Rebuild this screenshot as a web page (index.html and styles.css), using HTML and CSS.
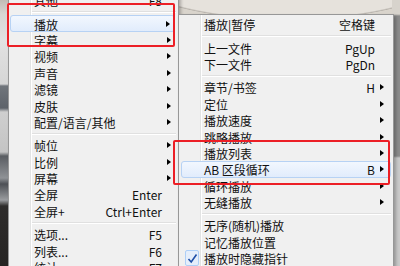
FILE: index.html
```html
<!DOCTYPE html>
<html lang="zh-CN">
<head>
<meta charset="utf-8"/>
<title>播放菜单</title>
<link rel="stylesheet" href="styles.css">
</head>
<body>
<div class="desk">
    <div class="strip-left"></div>
    <div class="strip-top"></div>
    <div class="strip-right"></div>

    <!-- Hauptmenü -->
    <div class="menu menu-main">
        <div class="item"><span class="label">其他</span><span class="key">F8</span><span class="arr"></span></div>
        <div class="sep"></div>
        <div class="item hot"><span class="label">播放</span><span class="arr"><i></i></span></div>
        <div class="item"><span class="label">字幕</span><span class="arr"><i></i></span></div>
        <div class="item"><span class="label">视频</span><span class="arr"><i></i></span></div>
        <div class="item"><span class="label">声音</span><span class="arr"><i></i></span></div>
        <div class="item"><span class="label">滤镜</span><span class="arr"><i></i></span></div>
        <div class="item"><span class="label">皮肤</span><span class="arr"><i></i></span></div>
        <div class="item"><span class="label">配置/语言/其他</span><span class="arr"><i></i></span></div>
        <div class="sep"></div>
        <div class="item"><span class="label">帧位</span><span class="arr"><i></i></span></div>
        <div class="item"><span class="label">比例</span><span class="arr"><i></i></span></div>
        <div class="item"><span class="label">屏幕</span><span class="arr"><i></i></span></div>
        <div class="item"><span class="label">全屏</span><span class="key">Enter</span><span class="arr"></span></div>
        <div class="item"><span class="label">全屏+</span><span class="key">Ctrl+Enter</span><span class="arr"></span></div>
        <div class="sep"></div>
        <div class="item"><span class="label">选项...</span><span class="key">F5</span><span class="arr"></span></div>
        <div class="item"><span class="label">列表...</span><span class="key">F6</span><span class="arr"></span></div>
        <div class="item"><span class="label">统计...</span><span class="key">F7</span><span class="arr"></span></div>
    </div>

    <!-- Untermenü Wiedergabe -->
    <div class="menu menu-sub">
        <div class="item"><span class="label">播放|暂停</span><span class="key">空格键</span><span class="arr"></span></div>
        <div class="sep"></div>
        <div class="item"><span class="label">上一文件</span><span class="key">PgUp</span><span class="arr"></span></div>
        <div class="item"><span class="label">下一文件</span><span class="key">PgDn</span><span class="arr"></span></div>
        <div class="sep"></div>
        <div class="item"><span class="label">章节/书签</span><span class="key">H</span><span class="arr"><i></i></span></div>
        <div class="item"><span class="label">定位</span><span class="arr"><i></i></span></div>
        <div class="item"><span class="label">播放速度</span><span class="arr"><i></i></span></div>
        <div class="item"><span class="label">跳略播放</span><span class="arr"><i></i></span></div>
        <div class="item"><span class="label">播放列表</span><span class="arr"><i></i></span></div>
        <div class="item hot"><span class="label">AB 区段循环</span><span class="key">B</span><span class="arr"><i></i></span></div>
        <div class="item"><span class="label">循环播放</span><span class="arr"><i></i></span></div>
        <div class="item"><span class="label">无缝播放</span><span class="arr"><i></i></span></div>
        <div class="sep"></div>
        <div class="item"><span class="label">无序(随机)播放</span><span class="arr"></span></div>
        <div class="item"><span class="label">记忆播放位置</span><span class="arr"></span></div>
        <div class="item checked">
            <span class="check"><svg width="11" height="11" viewBox="0 0 11 11"><path d="M1.5 6 L4.2 9 L9.5 1.5" fill="none" stroke="#1f4fa8" stroke-width="1.6"/></svg></span>
            <span class="label">播放时隐藏指针</span><span class="arr"></span>
        </div>
    </div>

    <!-- Markierungen -->
    <div class="mark mark-main"></div>
    <div class="mark mark-sub"></div>
</div>
</body>
</html>
```

FILE: styles.css
```css
body {
    margin: 0;
    font-family: "Noto Sans CJK SC", "Liberation Sans", sans-serif;
    font-size: 12px;
    color: #000;
}

.desk {
    position: relative;
    width: 400px;
    height: 266px;
    overflow: hidden;
    background: #c9c9c9;
}

/* Hintergrund hinter den Menüs */
.strip-left {
    position: absolute;
    left: 0;
    top: 0;
    width: 9px;
    height: 266px;
    background: linear-gradient(#c2bdb6 0, #d8d6d3 14px, #e2e2e2 40px, #d6d6d6 84px, #70757b 86px, #5e636a 108px, #cfcfcf 112px, #c4c4c4 152px, #5a5d62 156px, #8f9296 178px, #4d5055 184px, #9a9c9f 200px, #2e2c2b 206px, #262423 266px);
}

.strip-top {
    position: absolute;
    left: 178px;
    top: 0;
    width: 222px;
    height: 16px;
    background: radial-gradient(ellipse 180px 60px at 110px -40px, #e6e2dc 0, #e6e2dc 97%, #b9b4ad 99%, #d9d4cc 100%);
}

.strip-right {
    position: absolute;
    left: 392px;
    top: 0;
    width: 8px;
    height: 266px;
    background: linear-gradient(#d7d3cc 0, #d7d3cc 14px, #8b8b8b 16px, #8b8b8b 156px, #c9c9c9 158px);
}

/* Menüs */
.menu {
    position: absolute;
    border: 1px solid #979797;
    padding: 2px;
    background: linear-gradient(to right, #f0f0f0 21px, #e2e3e3 21px, #e2e3e3 22px, #fff 22px, #fff 23px, #f0f0f0 23px);
    box-shadow: 2px 2px 3px rgba(0, 0, 0, 0.25);
}

.menu-main {
    left: 8px;
    top: -11px;
    width: 165px;
}

.menu-sub {
    left: 178px;
    top: 14px;
    width: 210px;
    padding-top: 1px;
}

.item {
    display: flex;
    align-items: center;
    height: 16.4px;
    padding-left: 22px;
    padding-top: 2px;
    box-sizing: border-box;
    white-space: nowrap;
    line-height: 1;
    color: #111;
    border: 1px solid transparent;
    border-radius: 3px;
}

.item .label {
    flex: 1;
}

.item .key {
    text-align: right;
}

.item .arr {
    width: 9px;
    display: flex;
    justify-content: flex-end;
    margin-right: 4px;
    margin-top: -2px;
}

.menu-sub .item .arr {
    margin-right: 6px;
}

.item .arr i {
    width: 0;
    height: 0;
    border-top: 3.5px solid transparent;
    border-bottom: 3.5px solid transparent;
    border-left: 4px solid #000;
}

.item.hot {
    border-color: #b7d2f4;
    background: linear-gradient(#f2f7fe, #e1ecfc);
}

.menu-main .item.hot {
    margin-left: -1px;
    margin-right: 1px;
    padding-left: 23px;
}

.item.checked {
    padding-left: 0;
    padding-top: 0;
}

.check {
    width: 14px;
    height: 16px;
    margin-left: 3px;
    margin-right: 5px;
    display: flex;
    align-items: center;
    justify-content: center;
    border: 1px solid #aecff7;
    border-radius: 2px;
    background: #e5eefb;
    box-sizing: border-box;
}

.item.checked .label {
    padding-top: 2px;
}

.sep {
    height: 7px;
    margin-left: 21px;
    background:
        linear-gradient(#e0e0e0, #e0e0e0) 0 3px / 100% 1px no-repeat,
        linear-gradient(#fff, #fff) 0 4px / 100% 1px no-repeat;
}

/* rote Rahmen */
.mark {
    position: absolute;
    border: 2px solid #ec1f26;
    border-radius: 2px;
}

.mark-main {
    left: 7px;
    top: 3px;
    width: 164px;
    height: 40px;
}

.mark-sub {
    left: 173px;
    top: 140px;
    width: 213px;
    height: 41px;
}
```
